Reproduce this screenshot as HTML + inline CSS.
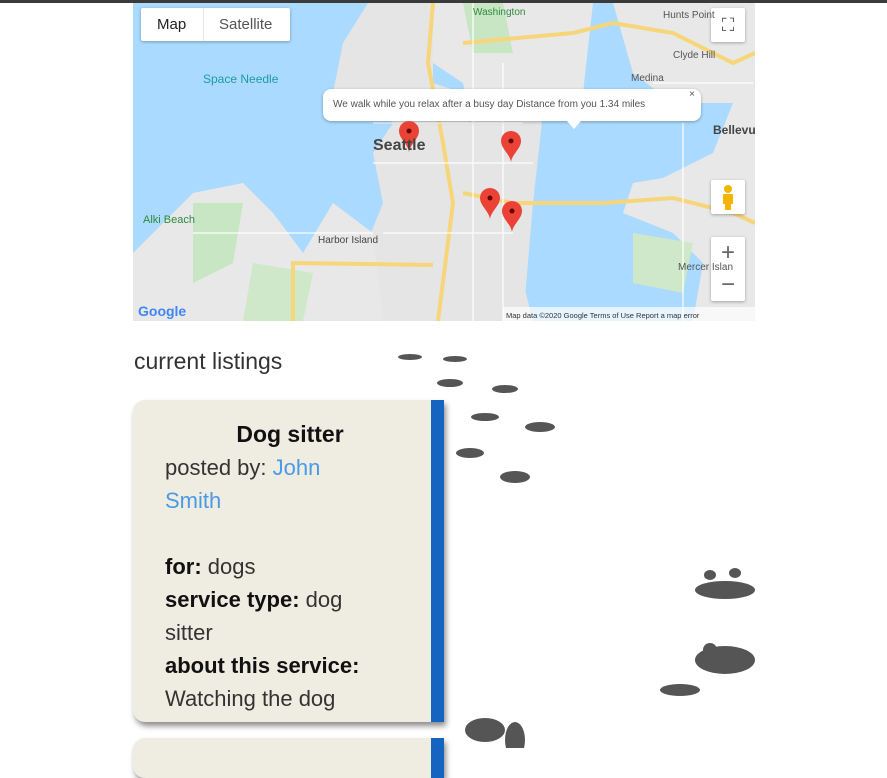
<!DOCTYPE html>
<html><head><style>
body{margin:0;width:887px;height:748px;overflow:hidden;background:#fff;font-family:"Liberation Sans",sans-serif;position:relative}
.top{position:absolute;left:0;top:0;width:887px;height:3px;background:#3a3a3a}
.map{position:absolute;left:133px;top:3px;width:622px;height:318px;overflow:hidden;background:#aadaff}
.btn{position:absolute;background:#fff;box-shadow:0 1px 3px rgba(0,0,0,.3)}
.h{position:absolute;left:134px;top:348px;font-size:23px;color:#333}
.card{position:absolute;left:133px;top:400px;width:311px;height:322px;background:#efece2;border-radius:12px 0 0 12px;box-shadow:2px 4px 6px rgba(0,0,0,.45);overflow:hidden}
.card .bar{position:absolute;right:0;top:0;width:13px;height:100%;background:#1565c0}
.card .in{position:absolute;left:32px;top:18px;width:213px;font-size:22px;line-height:33px;color:#333}
.card b{color:#111}
</style></head><body>
<div class="top"></div>
<div class="map">
<svg width="622" height="318" viewBox="0 0 622 318">
<rect width="622" height="318" fill="#aadaff"/>
<path d="M235 0 L300 0 L300 80 L330 90 L340 140 L390 150 L380 240 L400 318 L240 318 L230 250 L250 200 L240 150 L260 120 L230 100 L200 90 L210 40Z" fill="#e5e5e5"/>
<path d="M300 0 L460 0 L450 90 L400 100 L385 140 L340 130 L330 80 L300 60Z" fill="#e8e8e8"/>
<path d="M330 120 L410 110 L400 200 L390 318 L250 318 Z" fill="#e5e5e5"/>
<path d="M0 250 L60 190 L110 180 L140 210 L170 250 L200 200 L240 230 L250 318 L0 318Z" fill="#e8e8e8"/>
<path d="M480 0 L622 0 L622 318 L560 318 L570 260 L540 230 L490 210 L500 180 L530 175 L580 150 L600 100 L540 100 L500 70Z" fill="#e8e8e8"/>
<path d="M420 140 L480 110 L470 190 L440 220 L410 200Z" fill="#aadaff"/>
<path d="M60 200 L110 200 L100 260 L60 280Z" fill="#c8e6c4"/>
<path d="M120 260 L180 270 L170 318 L110 318Z" fill="#cfe8c9"/>
<path d="M330 0 L370 0 L380 50 L340 50Z" fill="#c8e6c4"/>
<path d="M500 230 L560 240 L550 290 L500 280Z" fill="#cfe8c9"/>
<g stroke="#f7d57a" stroke-width="4" fill="none">
<path d="M300 0 L295 60 L310 140 L320 200 L305 318"/>
<path d="M330 190 L380 200 L470 200 L540 195 L600 210 L622 220"/>
<path d="M160 318 L160 260 L300 262"/>
<path d="M330 40 L440 30 L480 20 L540 30 L600 60 L622 50"/>
</g>
<g stroke="#fff" stroke-width="1.5" fill="none" opacity=".8">
<path d="M240 120 L390 120 M240 160 L400 160 M250 230 L380 230 M340 0 L340 318 M370 60 L370 318 M60 230 L240 230 M520 80 L620 80 M550 120 L550 318"/>
</g>
</svg>
<div class="btn" style="left:8px;top:5px;width:149px;height:33px;border-radius:2px;font-size:15px;line-height:33px"><span style="position:absolute;left:16px;color:#222">Map</span><span style="position:absolute;left:62px;top:0;width:1px;height:33px;background:#e6e6e6"></span><span style="position:absolute;left:78px;color:#555">Satellite</span></div>
<div class="btn" style="left:578px;top:5px;width:34px;height:34px;border-radius:2px;font-size:18px;text-align:center;line-height:34px;color:#555">⛶</div>
<div class="btn" style="left:578px;top:177px;width:34px;height:34px;border-radius:2px"><svg width="34" height="34"><circle cx="17" cy="9" r="4" fill="#f4b400"/><path d="M12 14 h10 v10 h-2 v6 h-6 v-6 h-2z" fill="#f4b400"/></svg></div>
<div class="btn" style="left:578px;top:234px;width:34px;height:64px;border-radius:2px;font-size:24px;color:#666;text-align:center;line-height:32px">+<br>−</div>
<div class="btn" style="left:190px;top:86px;width:378px;height:32px;border-radius:8px;font-size:10px;color:#555;line-height:32px;text-indent:10px">We walk while you relax after a busy day Distance from you 1.34 miles<span style="position:absolute;right:6px;top:-10px">×</span></div>
<div style="position:absolute;left:434px;top:118px;width:0;height:0;border-left:7px solid transparent;border-right:7px solid transparent;border-top:8px solid #fff"></div>
<svg style="position:absolute;left:0;top:0" width="622" height="318">
<g fill="#ea4335"><path d="M276 118 a10 10 0 0 1 10 10 c0 8-10 14-10 22 c0-8-10-14-10-22 a10 10 0 0 1 10-10z"/>
<path d="M378 128 a10 10 0 0 1 10 10 c0 8-10 14-10 22 c0-8-10-14-10-22 a10 10 0 0 1 10-10z"/>
<path d="M357 185 a10 10 0 0 1 10 10 c0 8-10 14-10 22 c0-8-10-14-10-22 a10 10 0 0 1 10-10z"/>
<path d="M379 198 a10 10 0 0 1 10 10 c0 8-10 14-10 22 c0-8-10-14-10-22 a10 10 0 0 1 10-10z"/></g>
<g fill="#600"><circle cx="276" cy="128" r="2.5"/><circle cx="378" cy="138" r="2.5"/><circle cx="357" cy="195" r="2.5"/><circle cx="379" cy="208" r="2.5"/></g>
<text x="240" y="147" font-size="16" font-weight="bold" fill="#444" font-family="Liberation Sans">Seattle</text>
<text x="70" y="80" font-size="12" fill="#1e9aaa" font-family="Liberation Sans">Space Needle</text>
<text x="10" y="220" font-size="11" fill="#2e8b3c" font-family="Liberation Sans">Alki Beach</text>
<text x="185" y="240" font-size="10" fill="#444" font-family="Liberation Sans">Harbor Island</text>
<text x="580" y="131" font-size="12" font-weight="bold" fill="#444" font-family="Liberation Sans">Bellevu</text>
<text x="545" y="267" font-size="10" fill="#555" font-family="Liberation Sans">Mercer Islan</text>
<text x="530" y="15" font-size="10" fill="#555" font-family="Liberation Sans">Hunts Point</text>
<text x="540" y="55" font-size="10" fill="#555" font-family="Liberation Sans">Clyde Hill</text>
<text x="498" y="78" font-size="10" fill="#555" font-family="Liberation Sans">Medina</text>
<text x="340" y="12" font-size="10" fill="#2e8b3c" font-family="Liberation Sans">Washington</text>
<text x="5" y="313" font-size="14" font-weight="bold" fill="#4285f4" font-family="Liberation Sans">Google</text>
<rect x="370" y="304" width="252" height="14" fill="rgba(255,255,255,.7)"/>
<text x="373" y="315" font-size="7.5" fill="#333" font-family="Liberation Sans">Map data ©2020 Google   Terms of Use   Report a map error</text>
</svg>
</div>
<div class="h">current listings</div>
<svg style="position:absolute;left:380px;top:345px" width="380" height="403">
<g fill="#555">
<ellipse cx="30" cy="12" rx="12" ry="3"/><ellipse cx="75" cy="14" rx="12" ry="3"/>
<ellipse cx="70" cy="38" rx="13" ry="4"/><ellipse cx="125" cy="44" rx="13" ry="4"/>
<ellipse cx="105" cy="72" rx="14" ry="4"/><ellipse cx="160" cy="82" rx="15" ry="5"/>
<ellipse cx="90" cy="108" rx="14" ry="5"/><ellipse cx="135" cy="132" rx="15" ry="6"/>
<ellipse cx="345" cy="245" rx="30" ry="9"/><ellipse cx="345" cy="315" rx="30" ry="14"/>
<ellipse cx="330" cy="230" rx="6" ry="5"/><ellipse cx="355" cy="228" rx="6" ry="5"/>
<ellipse cx="330" cy="305" rx="7" ry="7"/><ellipse cx="300" cy="345" rx="20" ry="6"/>
<ellipse cx="105" cy="385" rx="20" ry="12"/><ellipse cx="135" cy="395" rx="10" ry="18"/>
</g></svg>
<div class="card"><div class="bar"></div><div class="in">
<div style="text-align:center;font-weight:bold;font-size:23px;color:#111;width:250px">Dog sitter</div>
posted by: <span style="color:#4a9ae6">John Smith</span><br><br>
<b>for:</b> dogs<br><b>service type:</b> dog sitter<br><b>about this service:</b><br>Watching the dog<br><b>accomodating:</b> large
</div></div>
<div class="card" style="top:738px;height:40px"><div class="bar"></div></div>
</body></html>
